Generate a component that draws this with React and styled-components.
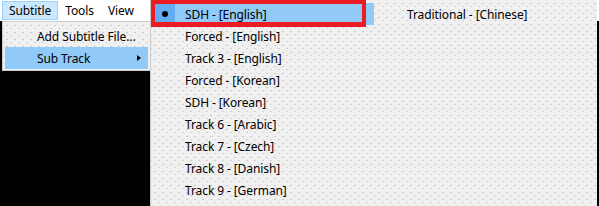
import styled, { createGlobalStyle } from "styled-components";

const GlobalStyle = createGlobalStyle`
  html, body {
    margin: 0;
    padding: 0;
    background: #000;
  }
  body {
    font-family: "Noto Sans", "Open Sans", sans-serif;
    font-size: 12px;
    letter-spacing: -0.1px;
    color: #000;
  }
`;

const dots = `
  background-color: #f0f0f0;
  background-image:
    radial-gradient(circle, #c9c9c9 0.6px, transparent 0.9px),
    radial-gradient(circle, #d2d2d2 0.6px, transparent 0.9px);
  background-size: 8px 7px, 8px 7px;
  background-position: 0 0, 4px 3px;
`;

const Window = styled.div`
  position: relative;
  width: 599px;
  height: 206px;
  overflow: hidden;
  background: #000;
`;

const MenuBar = styled.div`
  display: flex;
  align-items: center;
  height: 21px;
  padding-left: 2px;
  background: #fff;
`;

const BarItem = styled.div`
  height: 19px;
  line-height: 17px;
  padding: 0 6px;
  box-sizing: border-box;
  border: 1px solid ${(p) => (p.$open ? "#99d1ff" : "transparent")};
  background: ${(p) => (p.$open ? "#cce8ff" : "transparent")};
`;

const Dropdown = styled.div`
  position: absolute;
  left: 2px;
  top: 21px;
  width: 149px;
  height: 50px;
  box-sizing: border-box;
  padding: 3px 2px 0 2px;
  border: 1px solid #cccccc;
  ${dots}
`;

const Row = styled.div`
  position: relative;
  display: flex;
  align-items: center;
  height: 22px;
  padding-left: ${(p) => p.$indent}px;
  background: ${(p) => (p.$active ? "#91c9f7" : "transparent")};
  white-space: nowrap;
`;

const Arrow = styled.span`
  position: absolute;
  right: 7px;
  top: 8px;
  width: 0;
  height: 0;
  border-top: 3.5px solid transparent;
  border-bottom: 3.5px solid transparent;
  border-left: 4px solid #000;
`;

const SubMenu = styled.div`
  position: absolute;
  left: 150px;
  top: 0;
  width: 447px;
  height: 230px;
  box-sizing: border-box;
  padding: 3px 0 0 4px;
  display: flex;
  gap: 3px;
  border-left: 1px solid #cccccc;
  ${dots}
`;

const Column = styled.div`
  display: flex;
  flex-direction: column;
  width: ${(p) => p.$width}px;
`;

const Check = styled.span`
  position: absolute;
  left: 0;
  top: 0;
  width: 20px;
  height: 100%;
  display: flex;
  align-items: center;
  justify-content: center;
  background: #62adf2;
  &::after {
    content: "";
    width: 6px;
    height: 6px;
    border-radius: 50%;
    background: #000;
  }
`;

const Callout = styled.div`
  position: absolute;
  left: 151px;
  top: 0;
  width: 215px;
  height: 27px;
  box-sizing: border-box;
  border: 4px solid #ed1c24;
  border-bottom-width: 5px;
  pointer-events: none;
`;

const leftTracks = [
  "SDH - [English]",
  "Forced - [English]",
  "Track 3 - [English]",
  "Forced - [Korean]",
  "SDH - [Korean]",
  "Track 6 - [Arabic]",
  "Track 7 - [Czech]",
  "Track 8 - [Danish]",
  "Track 9 - [German]",
];

export default function App() {
  return (
    <Window>
      <GlobalStyle />
      <MenuBar>
        <BarItem $open>Subtitle</BarItem>
        <BarItem>Tools</BarItem>
        <BarItem>View</BarItem>
      </MenuBar>
      <Dropdown>
        <Row $indent={32}>Add Subtitle File...</Row>
        <Row $indent={32} $active>
          Sub Track
          <Arrow />
        </Row>
      </Dropdown>
      <SubMenu>
        <Column $width={219}>
          {leftTracks.map((t, i) => (
            <Row key={t} $indent={30} $active={i === 0}>
              {i === 0 && <Check />}
              {t}
            </Row>
          ))}
        </Column>
        <Column $width={200}>
          <Row $indent={30}>Traditional - [Chinese]</Row>
        </Column>
      </SubMenu>
      <Callout />
    </Window>
  );
}
